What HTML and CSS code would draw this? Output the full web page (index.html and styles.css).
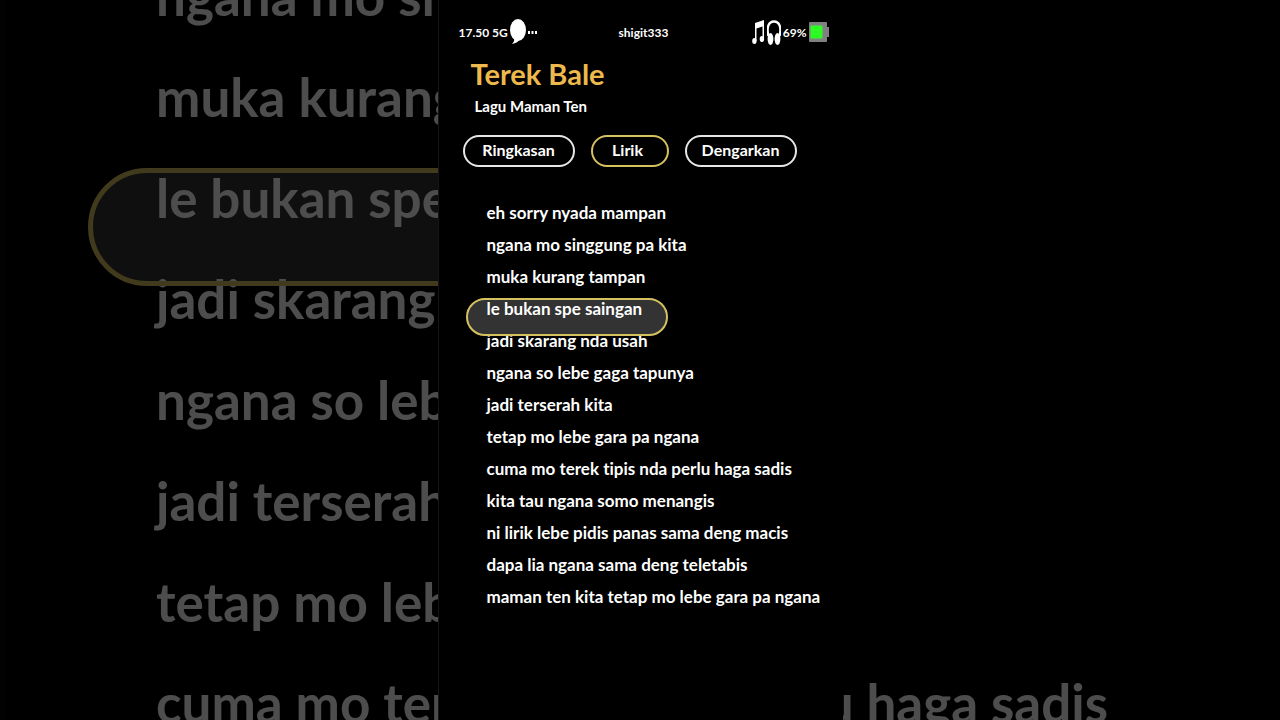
FILE: index.html
```html
<!DOCTYPE html>
<html lang="id">
<head>
    <meta charset="UTF-8">
    <meta name="viewport" content="width=device-width, initial-scale=1.0">
    <title>Terek Bale</title>
    <link rel="stylesheet" href="styles.css">
</head>
<body>
    <div class="backdrop" aria-hidden="true">
        <ul class="lyrics">
            <li>ngana mo singgung pa kita</li>
            <li>muka kurang tampan</li>
            <li class="active">le bukan spe saingan</li>
            <li>jadi skarang nda usah</li>
            <li>ngana so lebe gaga tapunya</li>
            <li>jadi terserah kita</li>
            <li>tetap mo lebe gara pa ngana</li>
            <li>cuma mo terek tipis nda perlu haga sadis</li>
        </ul>
    </div>

    <main class="phone">
        <header class="status-bar">
            <div class="status-group">
                <span>17.50 5G</span>
                <svg class="bubble" width="16" height="26" viewBox="0 0 16 26" fill="#fff">
                    <ellipse cx="8" cy="11" rx="8" ry="11"/>
                    <path d="M4 19 Q5 22 2 25 Q8 24 10 20 Z"/>
                </svg>
                <svg width="9" height="3" viewBox="0 0 9 3" fill="#fff">
                    <rect x="0" y="0" width="2" height="3"/>
                    <rect x="3.5" y="0" width="2" height="3"/>
                    <rect x="7" y="0" width="2" height="3"/>
                </svg>
            </div>
            <span class="user">shigit333</span>
            <div class="status-group right">
                <svg width="13" height="24" viewBox="0 0 13 24" fill="#fff">
                    <path d="M3 3 L12 0 V19 H10.5 V6.5 L4.5 8.5 V21 H3 Z"/>
                    <ellipse cx="2.4" cy="21" rx="2.2" ry="3"/>
                    <ellipse cx="9.9" cy="19" rx="2.2" ry="3"/>
                </svg>
                <svg width="14" height="25" viewBox="0 0 14 25" fill="#fff">
                    <path d="M1.5 16 C-1 7 2 1.5 7 1.5 S15 7 12.5 16" fill="none" stroke="#fff" stroke-width="2.4"/>
                    <ellipse cx="3.5" cy="19" rx="2.9" ry="6"/>
                    <ellipse cx="10.5" cy="19" rx="2.9" ry="6"/>
                </svg>
                <span>69%</span>
                <svg width="20" height="20" viewBox="0 0 20 20">
                    <rect x="0" y="0" width="18" height="20" rx="1" fill="#808080"/>
                    <rect x="18" y="5" width="2" height="10" fill="#808080"/>
                    <rect x="1.5" y="3.5" width="12" height="13" rx="1" fill="#2dfc24"/>
                </svg>
            </div>
        </header>

        <h1>Terek Bale</h1>
        <p class="artist">Lagu Maman Ten</p>

        <nav class="tabs">
            <button type="button">Ringkasan</button>
            <button type="button" class="selected">Lirik</button>
            <button type="button">Dengarkan</button>
        </nav>

        <ul class="lyrics">
            <li>eh sorry nyada mampan</li>
            <li>ngana mo singgung pa kita</li>
            <li>muka kurang tampan</li>
            <li class="active">le bukan spe saingan</li>
            <li>jadi skarang nda usah</li>
            <li>ngana so lebe gaga tapunya</li>
            <li>jadi terserah kita</li>
            <li>tetap mo lebe gara pa ngana</li>
            <li>cuma mo terek tipis nda perlu haga sadis</li>
            <li>kita tau ngana somo menangis</li>
            <li>ni lirik lebe pidis panas sama deng macis</li>
            <li>dapa lia ngana sama deng teletabis</li>
            <li>maman ten kita tetap mo lebe gara pa ngana</li>
        </ul>
    </main>
</body>
</html>
```

FILE: styles.css
```css
:root {
    --gold: #edb84c;
    --line: #d6c160;
    --light: #fff;
}

*,
*::after {
    margin: 0;
    padding: 0;
    box-sizing: border-box;
}

body {
    font-family: Lato, sans-serif;
    font-weight: 700;
    font-variant-ligatures: none;
    display: flex;
    justify-content: center;
    min-height: 100vh;
    background: #000;
    color: var(--light);
    overflow: hidden;
}

/* Enlarged, dimmed lyrics behind the phone */
.backdrop {
    position: absolute;
    inset: 0;
    overflow: hidden;
    opacity: 0.3;
    border-left: 5px solid #080810;
}

.backdrop .lyrics {
    margin: -55px 0 0 151px;
    font-size: 53px;
    line-height: 101px;
}

.backdrop .active::after {
    top: 21px;
    left: -68px;
    width: 635px;
    height: 118px;
    border-width: 5px;
}

.phone {
    position: relative;
    min-width: 0;
    height: 100vh;
    aspect-ratio: 9 / 16;
    padding: 16px 14px 0 20px;
    background: #000;
    border-left: 1px solid #14141c;
}

.status-bar {
    display: grid;
    grid-template-columns: 1fr auto 1fr;
    align-items: center;
    height: 32px;
    font-size: 12px;
}

.status-group {
    display: flex;
    align-items: center;
    gap: 2px;
}

.right {
    justify-content: flex-end;
}

h1 {
    padding-left: 12px;
    font-size: 29px;
    line-height: 52px;
    color: var(--gold);
}

.artist {
    padding-left: 16px;
    font-size: 15px;
    line-height: 12px;
}

.tabs {
    display: grid;
    grid-template-columns: 112px 78px 112px;
    gap: 16px;
    padding: 23px 0 0 4px;
}

.tabs button {
    height: 32px;
    padding-bottom: 4px;
    border: 2px solid #e6e6e6;
    border-radius: 16px;
    background: none;
    color: var(--light);
    font: inherit;
    font-size: 16px;
    cursor: pointer;
}

.tabs .selected {
    padding-right: 4px;
    border-color: var(--line);
}

.lyrics {
    list-style: none;
    white-space: nowrap;
}

.phone .lyrics {
    margin: 30px 0 0 28px;
    font-size: 17px;
    line-height: 32px;
}

.active {
    position: relative;
}

/* Highlight pill around the current line */
.active::after {
    content: '';
    position: absolute;
    top: 5px;
    left: -21px;
    width: 202px;
    height: 38px;
    border: 2px solid var(--line);
    border-radius: 60px;
    background: rgba(255, 255, 255, 0.2);
}
```
